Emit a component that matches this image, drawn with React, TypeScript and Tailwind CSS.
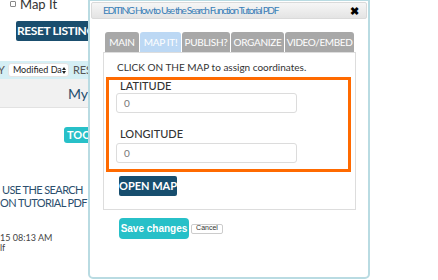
import React from "react";

export default function App() {
  return (
    <div className="relative w-[438px] h-[280px] overflow-hidden bg-white" style={{ fontFamily: "Lato, 'Open Sans', sans-serif" }}>
      {/* background page */}
      <div className="flex flex-col w-[370px]">
        <div className="flex items-center h-[10px] pl-[10px] mt-[-1px] gap-[4px]">
          <div className="w-[6px] h-[6px] border border-[#888] bg-white rounded-[1px]" />
          <span className="text-[13px] text-[#333] leading-none">Map It</span>
        </div>
        <div className="mt-[12px] ml-[16px] w-[80px] h-[20px] bg-[#1a4e6e] rounded-[2px] flex items-center pl-[1px]">
          <span className="text-white text-[12px] font-bold whitespace-nowrap tracking-[-0.4px]">RESET LISTINGS</span>
        </div>
        <div className="mt-[20px] h-[18px] bg-[#d5eff5] flex items-center text-[11px] text-[#555] whitespace-nowrap">
          <span className="ml-[-2px]">Y</span>
          <div className="ml-[3px] w-[61px] h-[14px] bg-white rounded-[3px] border border-[#e4e4e4] flex items-center justify-between pl-[4px] pr-[5px] text-[9px] text-[#222] whitespace-nowrap">
            <span>Modified Da</span>
            <svg className="shrink-0" width="4" height="7" viewBox="0 0 4 7"><path d="M2 0L4 3H0Z M0 4H4L2 7Z" fill="#222" /></svg>
          </div>
          <span className="ml-[4px]">RES</span>
        </div>
        <div className="h-[29px] bg-[#f1f1f1] border-b border-[#e2e2e2] flex items-center pl-[68px]">
          <span className="text-[14px] text-[#1f4f6e]">My D</span>
        </div>
        <div className="mt-[19px] ml-[64px] w-[30px] h-[16px] bg-[#27c0c8] rounded-[3px] flex items-center pl-[3px]">
          <span className="text-white text-[11px] font-bold">TOOLS</span>
        </div>
        <div className="mt-[40px] ml-[2px] text-[11px] leading-[13px] text-[#2c4f6e] whitespace-nowrap tracking-[-0.6px]">
          <div>USE THE SEARCH</div>
          <div className="ml-[-2px]">ON TUTORIAL PDF</div>
        </div>
        <div className="mt-[24px] text-[9px] leading-[10px] text-[#444] whitespace-nowrap">
          <div>15 08:13 AM</div>
          <div>lf</div>
        </div>
      </div>

      {/* dialog */}
      <div className="absolute left-[88px] top-[-1px] w-[282px] h-[280px] border-2 border-[#b9dbe2] rounded-b-[5px] bg-white p-[1px] flex flex-col">
        <div className="h-[17px] bg-gradient-to-b from-[#f6f6f6] to-[#e4e4e4] border border-[#dadada] rounded-[2px] flex items-center justify-between pl-[11px] pr-[7px]">
          <span className="text-[10px] text-[#3a7fb8] tracking-[-1.3px] whitespace-nowrap">EDITING How to Use the Search Function Tutorial PDF</span>
          <span className="text-[11px] text-black leading-none font-bold">✖</span>
        </div>
        <div className="ml-[12px] mt-[13px] w-[253px]">
          <div className="flex gap-[1px] pl-[2px] h-[20px] whitespace-nowrap">
            <div className="w-[34px] bg-[#a8a8a8] rounded-t-[3px] flex items-center justify-center text-[10px] text-white tracking-[-0.3px]">MAIN</div>
            <div className="w-[41px] bg-[#bcd8f4] rounded-t-[3px] flex items-center justify-center text-[10px] text-white tracking-[-0.3px]">MAP IT!</div>
            <div className="w-[48px] bg-[#a8a8a8] rounded-t-[3px] flex items-center justify-center text-[10px] text-white tracking-[-0.3px]">PUBLISH?</div>
            <div className="w-[53px] bg-[#a8a8a8] rounded-t-[3px] flex items-center justify-center text-[10px] text-white tracking-[-0.3px]">ORGANIZE</div>
            <div className="w-[69px] bg-[#a8a8a8] rounded-t-[3px] flex items-center justify-center text-[10px] text-white tracking-[-0.4px]">VIDEO/EMBED</div>
          </div>
          <div className="h-[158px] border border-[#dddddd] bg-white pt-[9px] pl-[2px] pr-[4px]">
            <div className="pl-[11px] text-[10px] text-[#333] leading-[10px]">CLICK ON THE MAP to assign coordinates.</div>
            <div className="mt-[5px] h-[95px] border-[3px] border-[#ff6a00] pl-[7px]">
              <div className="pl-[4px] text-[11px] text-[#333] font-medium leading-[11px]">LATITUDE</div>
              <div className="mt-[2px] w-[181px] h-[20px] border border-[#dcdcdc] rounded-[3px] flex items-center pl-[7px] text-[10px] text-[#777]">0</div>
              <div className="mt-[15px] pl-[4px] text-[11px] text-[#333] font-medium leading-[11px]">LONGITUDE</div>
              <div className="mt-[4px] w-[181px] h-[20px] border border-[#dcdcdc] rounded-[3px] flex items-center pl-[7px] text-[10px] text-[#777]">0</div>
            </div>
            <div className="mt-[4px] ml-[13px] w-[58px] h-[20px] bg-[#174e6e] rounded-[2px] flex items-center justify-center text-[11px] text-white font-bold">OPEN MAP</div>
          </div>
        </div>
        <div className="mt-[8px] ml-[28px] flex items-center gap-[2px]">
          <div className="w-[70px] h-[21px] bg-[#27c0c8] rounded-[4px] flex items-center justify-center text-[10px] text-white font-bold" style={{ fontFamily: "'Liberation Sans', Arial, sans-serif" }}>Save changes</div>
          <div className="w-[32px] h-[10px] border border-[#cccccc] rounded-[2px] bg-white flex items-center justify-center text-[7px] text-[#333]" style={{ fontFamily: "'Liberation Sans', Arial, sans-serif" }}>Cancel</div>
        </div>
      </div>
    </div>
  );
}
